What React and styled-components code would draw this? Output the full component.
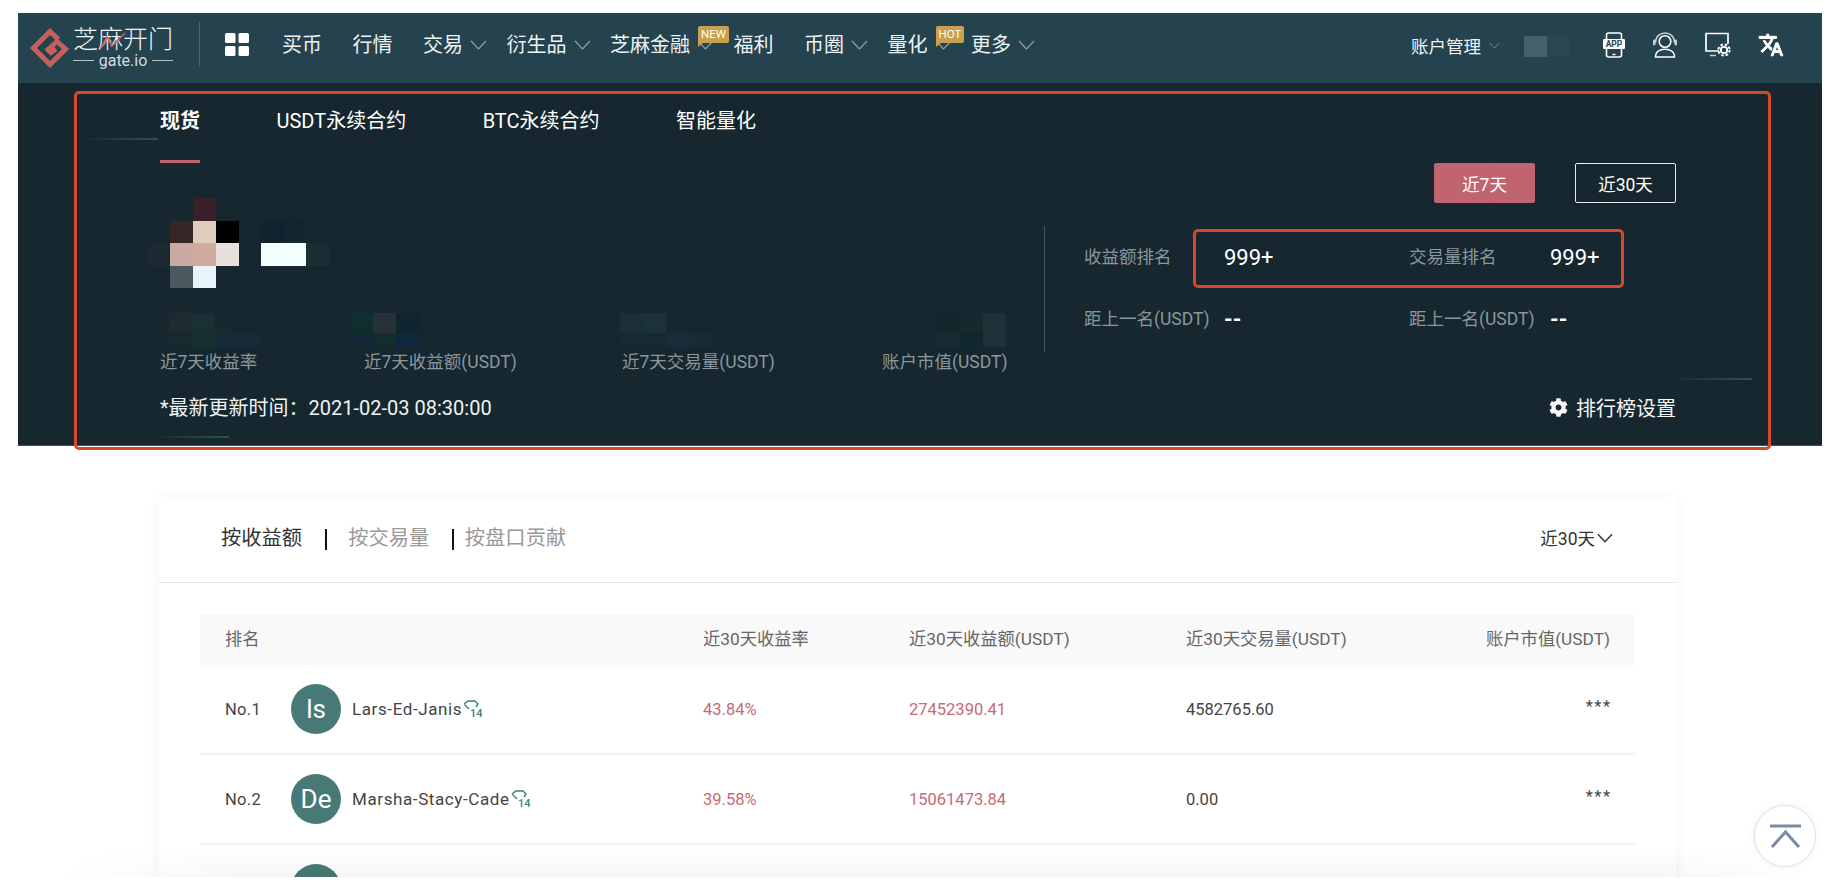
import React from "react";
import styled, { createGlobalStyle } from "styled-components";
import { FaCog } from "react-icons/fa";

const GlobalStyle = createGlobalStyle`
  html, body {
    margin: 0;
    padding: 0;
    background: #fff;
    overflow: hidden;
  }
  * {
    box-sizing: border-box;
  }
  body {
    font-family: Roboto, "Noto Sans CJK SC", sans-serif;
  }
`;

const Page = styled.div`
  width: 1838px;
  height: 890px;
  padding: 13px 16px 13px 18px;
`;

const Frame = styled.div`
  position: relative;
  height: 864px;
  overflow: hidden;
`;

const Header = styled.header`
  height: 70px;
  background: #25424f;
  display: flex;
  align-items: center;
  padding: 0 38px 7px 12px;
  color: #eef3f4;
`;

const LogoWrap = styled.div`
  display: flex;
  align-items: center;
  gap: 3px;
  margin-top: 6px;
`;

const LogoText = styled.div`
  position: relative;
  width: 100px;
  display: flex;
  flex-direction: column;
  align-items: stretch;
`;

const LogoName = styled.div`
  font-size: 25px;
  line-height: 26px;
  font-weight: 300;
  color: #f4f7f8;
  white-space: nowrap;
`;

const LogoSub = styled.div`
  display: flex;
  align-items: center;
  gap: 5px;
  font-size: 16px;
  line-height: 16px;
  color: #d4dcdf;

  &::before,
  &::after {
    content: "";
    flex: 1;
    height: 1px;
    background: #b9c5ca;
  }
`;

const LogoZig = styled.svg`
  position: absolute;
  left: 26px;
  top: 4px;
`;

const HeadDivider = styled.div`
  width: 1px;
  height: 45px;
  background: #4b6470;
  margin: 0 25px 0 26px;
`;

const NavList = styled.nav`
  display: flex;
  align-items: center;
  margin-left: 33px;
`;

const NavItem = styled.div`
  display: flex;
  align-items: center;
  gap: 7px;
  font-size: 20px;
  line-height: 28px;
  white-space: nowrap;
  margin-right: ${(p) => (p.$arrow ? "19.5px" : "30.5px")};
`;

const ArrowWrap = styled.span`
  position: relative;
  display: flex;
`;

const Badge = styled.span`
  position: absolute;
  left: 1px;
  top: -14px;
  min-width: 26px;
  height: 17px;
  padding: 0 3px;
  background: #c9a04e;
  border-radius: 2px 2px 2px 0;
  color: #fff;
  font-size: 11.5px;
  line-height: 17px;
  text-align: center;

  &::after {
    content: "";
    position: absolute;
    left: 0;
    bottom: -4px;
    border-top: 4px solid #c9a04e;
    border-right: 5px solid transparent;
  }
`;

const HeadRight = styled.div`
  margin-left: auto;
  display: flex;
  align-items: center;
`;

const AccountLink = styled.div`
  display: flex;
  align-items: center;
  gap: 8px;
  font-size: 17.5px;
  margin-top: 2px;
`;

const UserBlur = styled.div`
  display: flex;
  margin: 4px 33px 0 24px;
  border-radius: 1px;
`;

const BlurCell = styled.span`
  display: block;
  width: ${(p) => p.$w || 23}px;
  height: ${(p) => p.$h || 21}px;
  background: ${(p) => p.$c};
`;

const IconRow = styled.div`
  display: flex;
  align-items: center;
  gap: 27px;
`;

const Hero = styled.section`
  position: relative;
  height: 363px;
  padding: 0 146px 0 142px;
  background-color: #16272f;
  background-image: repeating-linear-gradient(
      90deg,
      rgba(255, 255, 255, 0.008) 0 1px,
      transparent 1px 70px
    ),
    repeating-linear-gradient(0deg, rgba(255, 255, 255, 0.006) 0 1px, transparent 1px 70px);
  border-bottom: 1px solid #3c5055;
  color: #fff;
`;

const Streak = styled.div`
  position: absolute;
  left: ${(p) => p.$x}px;
  top: ${(p) => p.$y}px;
  width: ${(p) => p.$w}px;
  height: 2px;
  background: linear-gradient(90deg, transparent, #2d5255);
`;

const TabBar = styled.div`
  display: flex;
  gap: 76.5px;
  height: 80px;
`;

const Tab = styled.div`
  padding-top: 25px;
  height: 80px;
  font-size: 20px;
  line-height: 26px;
  white-space: nowrap;
  font-weight: ${(p) => (p.$active ? 700 : 400)};
  border-bottom: 3px solid ${(p) => (p.$active ? "#c06570" : "transparent")};
`;

const HeroBody = styled.div`
  display: grid;
  grid-template-columns: 884px 1fr;
`;

const LeftCol = styled.div`
  padding-top: 35px;
`;

const Profile = styled.div`
  display: flex;
  align-items: flex-start;
  gap: 22px;
  margin-left: -13px;
`;

const PixelGrid = styled.div`
  display: grid;
  grid-template-columns: repeat(4, 23px);
  grid-auto-rows: 22.5px;
`;

const NameGrid = styled.div`
  display: grid;
  grid-template-columns: repeat(3, 22.5px);
  grid-auto-rows: 22.5px;
  margin-top: 22.5px;
`;

const Pixel = styled.span`
  background: ${(p) => p.$c};
`;

const StatGrid = styled.div`
  display: grid;
  grid-template-columns: 204px 258px 260px 1fr;
  margin-top: 25px;
`;

const Stat = styled.div`
  display: flex;
  flex-direction: column;
`;

const ValueBlur = styled.div`
  display: grid;
  grid-template-columns: repeat(${(p) => p.$cols}, 23px);
  grid-template-rows: 20px 14px;
  height: 34px;
  margin-left: ${(p) => p.$offset}px;
`;

const StatLabel = styled.div`
  margin-top: 3px;
  font-size: 17.5px;
  line-height: 24px;
  color: #8a979b;
  white-space: nowrap;
`;

const UpdateLine = styled.div`
  margin-top: 22px;
  font-size: 20px;
  line-height: 24px;
  color: #f0f3f4;
  white-space: nowrap;
`;

const RightCol = styled.div`
  display: flex;
  flex-direction: column;
`;

const RangeRow = styled.div`
  display: flex;
  justify-content: flex-end;
  gap: 40px;
  height: 40px;
`;

const RangeButton = styled.div`
  width: 101px;
  height: 40px;
  display: flex;
  align-items: center;
  justify-content: center;
  font-size: 17.5px;
  border-radius: 2px;
  border: 1px solid ${(p) => (p.$active ? "#c06570" : "#e8ecee")};
  background: ${(p) => (p.$active ? "#c06570" : "transparent")};
`;

const RankPanel = styled.div`
  position: relative;
  margin-top: 23px;
  height: 126px;
  border-left: 1px solid #47555b;
  padding-left: 39px;
  display: grid;
  grid-template-columns: 140px 185px 141px 1fr;
  grid-auto-rows: 62px;
  align-items: center;
`;

const RankLabel = styled.div`
  font-size: 17.5px;
  line-height: 24px;
  color: #8a979b;
  white-space: nowrap;
`;

const RankValue = styled.div`
  font-size: 22px;
  font-weight: ${(p) => (p.$dash ? 700 : 400)};
  color: #fff;
`;

const RankHighlight = styled.div`
  position: absolute;
  left: 148px;
  top: 3px;
  width: 431px;
  height: 59px;
  border: 3px solid #d9472b;
  border-radius: 5px;
  pointer-events: none;
`;

const SettingsLink = styled.div`
  margin-top: 43px;
  height: 24px;
  display: flex;
  justify-content: flex-end;
  align-items: center;
  gap: 8px;
  font-size: 20px;
  color: #f4f6f7;
`;

const Outline = styled.div`
  position: absolute;
  left: 56px;
  top: 78px;
  width: 1697px;
  height: 359px;
  border: 3px solid #d9472b;
  border-radius: 5px;
  pointer-events: none;
`;

const Card = styled.section`
  width: 1517px;
  margin: 51px 0 0 141px;
  background: #fff;
  box-shadow: 0 0 12px rgba(0, 0, 0, 0.05);
`;

const CardHead = styled.div`
  height: 86px;
  padding: 0 63px 4px 62px;
  display: flex;
  align-items: center;
  justify-content: space-between;
  border-bottom: 1px solid #e6e8e9;
`;

const SortTabs = styled.div`
  display: flex;
  align-items: center;
`;

const SortTab = styled.span`
  font-size: 20.3px;
  line-height: 24px;
  color: ${(p) => (p.$active ? "#333" : "#999")};
`;

const SortSep = styled.span`
  width: 2px;
  height: 21px;
  background: #111;
  margin: 4px ${(p) => (p.$tight ? 11 : 21.5)}px 0 22.5px;
`;

const PeriodSelect = styled.div`
  display: flex;
  align-items: center;
  gap: 2px;
  font-size: 17.5px;
  color: #333;
`;

const Table = styled.div`
  margin: 31px 41px 0;
`;

const HeadRow = styled.div`
  display: grid;
  grid-template-columns: 478px 206px 277px 1fr;
  align-items: center;
  height: 51px;
  background: #f9f9f9;
  padding: 0 25px 4px;
  font-size: 17.3px;
  color: #666;
`;

const BodyRow = styled.div`
  display: grid;
  grid-template-columns: 478px 206px 277px 1fr;
  align-items: center;
  height: 90px;
  padding: 0 25px;
  border-bottom: 2px solid #f3f3f3;
  font-size: 16.5px;
  color: #444;
`;

const RankCell = styled.div`
  display: flex;
  align-items: center;
`;

const RankNo = styled.span`
  width: 66px;
  letter-spacing: 0.3px;
`;

const Avatar = styled.span`
  width: 50px;
  height: 50px;
  border-radius: 50%;
  background: #477a76;
  color: #fff;
  font-size: 26px;
  display: flex;
  align-items: center;
  justify-content: center;
  margin-right: 11px;
`;

const UserName = styled.span`
  color: #444;
  font-size: 17px;
  letter-spacing: 0.6px;
  margin-right: 1px;
`;

const ProfitCell = styled.div`
  color: #c66a76;
`;

const SplitCell = styled.div`
  display: flex;
  align-items: center;
  justify-content: space-between;
`;

const MaskedValue = styled.span`
  letter-spacing: 1.5px;
  margin-right: -1.5px;
  transform: translateY(-3px);
`;

const BottomFade = styled.div`
  position: absolute;
  left: 40px;
  right: 10px;
  bottom: 0;
  height: 30px;
  background: linear-gradient(180deg, rgba(0, 0, 0, 0), rgba(0, 0, 0, 0.04));
  mask-image: linear-gradient(90deg, transparent, #000 12%, #000 90%, transparent);
  pointer-events: none;
`;

const BackTop = styled.div`
  position: absolute;
  right: 6px;
  bottom: 10px;
  width: 62px;
  height: 62px;
  border-radius: 50%;
  background: #fff;
  border: 1.5px solid #dbe2ee;
  box-shadow: 0 0 6px rgba(120, 140, 180, 0.15);
  display: flex;
  align-items: center;
  justify-content: center;
`;

const Chevron = ({ w = 17, h = 10, color = "#93a6ae", weight = 1.1 }) => (
  <svg width={w} height={h} viewBox="0 0 17 10" fill="none">
    <polyline points="1,1 8.5,9 16,1" stroke={color} strokeWidth={weight} />
  </svg>
);

const GateMark = () => (
  <svg width="40" height="40" viewBox="0 0 40 40" fill="none">
    <path
      d="M28.5 11.5 L20 3.5 L3.5 20 L20 36.5 L35.5 21 L27 13.5 L18 21.5 L21 24.5 L26 21"
      stroke="#c4615d"
      strokeWidth="5"
    />
  </svg>
);

const GridIcon = () => (
  <svg width="24" height="23" viewBox="0 0 24 23" fill="#fff">
    <rect x="0" y="0" width="10.5" height="10" rx="1.5" />
    <rect x="13.5" y="0" width="10.5" height="10" rx="1.5" />
    <rect x="0" y="13" width="10.5" height="10" rx="1.5" />
    <rect x="13.5" y="13" width="10.5" height="10" rx="1.5" />
  </svg>
);

const AppIcon = () => (
  <svg width="22" height="26" viewBox="0 0 22 26" fill="none">
    <rect x="3.5" y="1" width="15" height="24" rx="2" stroke="#fff" strokeWidth="1.6" />
    <line x1="9.5" y1="22.5" x2="12.5" y2="22.5" stroke="#fff" strokeWidth="1.4" />
    <rect x="0" y="7" width="22" height="10" rx="1" fill="#fff" />
    <text x="11" y="15" textAnchor="middle" fontSize="8.5" fontWeight="700" fontFamily="Roboto" fill="#25424f">
      APP
    </text>
  </svg>
);

const HeadsetIcon = () => (
  <svg width="26" height="27" viewBox="0 0 26 27" fill="none" stroke="#fff" strokeWidth="1.5">
    <path d="M3.5 12 C3.5 -1.5 22.5 -1.5 22.5 12" stroke="#c6d0d4" />
    <circle cx="13" cy="10.5" r="5.8" />
    <rect x="1" y="8.5" width="2.4" height="6" rx="1.2" fill="#c6d0d4" stroke="none" />
    <rect x="22.6" y="8.5" width="2.4" height="6" rx="1.2" fill="#c6d0d4" stroke="none" />
    <path d="M3.5 26 C3.5 20.5 8 18.2 13 18.2 C18 18.2 22.5 20.5 22.5 26 Z" />
  </svg>
);

const ScreenGearIcon = () => (
  <svg width="26" height="26" viewBox="0 0 26 26" fill="none" stroke="#fff">
    <path d="M14 19 H1 V1.5 H23 V12" strokeWidth="1.7" />
    <line x1="5" y1="23.5" x2="11" y2="23.5" strokeWidth="1.5" stroke="#c6d0d4" />
    <circle cx="19" cy="18" r="3.2" strokeWidth="1.8" />
    <circle cx="19" cy="18" r="5.6" strokeWidth="2" strokeDasharray="2.6 1.8" />
  </svg>
);

const TranslateIcon = () => (
  <svg width="26" height="26" viewBox="0 0 24 24" fill="#fff" stroke="#fff" strokeWidth="0.9">
    <path d="M12.87 15.07l-2.54-2.51.03-.03c1.74-1.94 2.98-4.17 3.71-6.53H17V4h-7V2H8v2H1v1.99h11.17C11.5 7.92 10.4 9.75 9 11.3 8.09 10.29 7.34 9.18 6.75 8h-2c.73 1.63 1.73 3.17 2.98 4.56l-5.09 5.02L4 19l5-5 3.11 3.11.76-2.04zM18.5 10h-2L12 22h2l1.12-3h4.75L21 22h2l-4.5-12zm-2.62 7l1.62-4.33L19.12 17h-3.24z" />
  </svg>
);

const LevelBadge = () => (
  <svg width="22" height="18" viewBox="0 0 22 18" fill="none">
    <path d="M1 4 L5 1 H12 L15 4 L13 7 M1 4 L6 9" stroke="#3f7d77" strokeWidth="1.4" />
    <text x="7" y="16.5" fontSize="11" fontWeight="500" fontFamily="Roboto" fill="#3f7d77">
      14
    </text>
  </svg>
);

const navItems = [
  { label: "买币" },
  { label: "行情" },
  { label: "交易", arrow: true },
  { label: "衍生品", arrow: true },
  { label: "芝麻金融", arrow: true, badge: "NEW" },
  { label: "福利" },
  { label: "币圈", arrow: true },
  { label: "量化", arrow: true, badge: "HOT" },
  { label: "更多", arrow: true },
];

const heroTabs = ["现货", "USDT永续合约", "BTC永续合约", "智能量化"];

const avatarPixels = [
  "transparent", "transparent", "#3a1f28", "transparent",
  "transparent", "#352525", "#e0cdbc", "#000",
  "#1b2a30", "#c8aaa2", "#cfaa9e", "#e8e0dc",
  "transparent", "#4a5860", "#e8f4fc", "transparent",
];

const namePixels = [
  "#12232f", "#12262f", "transparent",
  "#f4ffff", "#f4ffff", "#1c2d34",
];

const stats = [
  {
    label: "近7天收益率",
    offset: 9,
    cols: 4,
    cells: ["#1e2c30", "#1a3035", "#17282f", "#16272f", "#182a2e", "#16302e", "#162a38", "#172a38"],
  },
  {
    label: "近7天收益额(USDT)",
    offset: -14,
    cols: 3,
    cells: ["#102e2e", "#283038", "#10262e", "#15283a", "#122e2c", "#10283e"],
  },
  {
    label: "近7天交易量(USDT)",
    offset: -2,
    cols: 4,
    cells: ["#1b2f37", "#1a3238", "#16272f", "#16272f", "#172a33", "#172a33", "#192c3a", "#182b36"],
  },
  {
    label: "账户市值(USDT)",
    offset: 55,
    cols: 3,
    cells: ["#14282b", "#142a2d", "#1d3238", "#182a32", "#10282c", "#1d3238"],
  },
];

const rows = [
  { no: "No.1", short: "ls", name: "Lars-Ed-Janis", rate: "43.84%", profit: "27452390.41", volume: "4582765.60", value: "***" },
  { no: "No.2", short: "De", name: "Marsha-Stacy-Cade", rate: "39.58%", profit: "15061473.84", volume: "0.00", value: "***" },
];

const App = () => {
  return (
    <Page>
      <GlobalStyle />
      <Frame>
        <Header>
          <LogoWrap>
            <GateMark />
            <LogoText>
              <LogoName>芝麻开门</LogoName>
              <LogoSub>gate.io</LogoSub>
              <LogoZig width="34" height="20" viewBox="0 0 34 20" fill="none">
                <polyline points="2,17 8,6 13,15 26,2" stroke="#c4615d" strokeWidth="1.6" />
              </LogoZig>
            </LogoText>
          </LogoWrap>
          <HeadDivider />
          <GridIcon />
          <NavList>
            {navItems.map((item) => (
              <NavItem key={item.label} $arrow={item.arrow}>
                {item.label}
                {item.arrow && (
                  <ArrowWrap>
                    <Chevron />
                    {item.badge && <Badge>{item.badge}</Badge>}
                  </ArrowWrap>
                )}
              </NavItem>
            ))}
          </NavList>
          <HeadRight>
            <AccountLink>
              账户管理
              <Chevron w={11} h={7} />
            </AccountLink>
            <UserBlur>
              <BlurCell $c="#46606d" />
              <BlurCell $c="#2a4853" />
            </UserBlur>
            <IconRow>
              <AppIcon />
              <HeadsetIcon />
              <ScreenGearIcon />
              <TranslateIcon />
            </IconRow>
          </HeadRight>
        </Header>

        <Hero>
          <Streak $x={62} $y={55} $w={78} />
          <Streak $x={132} $y={353} $w={79} />
          <Streak $x={1649} $y={295} $w={85} />
          <TabBar>
            {heroTabs.map((tab, i) => (
              <Tab key={tab} $active={i === 0}>
                {tab}
              </Tab>
            ))}
          </TabBar>
          <HeroBody>
            <LeftCol>
              <Profile>
                <PixelGrid>
                  {avatarPixels.map((c, i) => (
                    <Pixel key={i} $c={c} />
                  ))}
                </PixelGrid>
                <NameGrid>
                  {namePixels.map((c, i) => (
                    <Pixel key={i} $c={c} />
                  ))}
                </NameGrid>
              </Profile>
              <StatGrid>
                {stats.map((s) => (
                  <Stat key={s.label}>
                    <ValueBlur $cols={s.cols} $offset={s.offset}>
                      {s.cells.map((c, i) => (
                        <Pixel key={i} $c={c} />
                      ))}
                    </ValueBlur>
                    <StatLabel>{s.label}</StatLabel>
                  </Stat>
                ))}
              </StatGrid>
              <UpdateLine>*最新更新时间：2021-02-03 08:30:00</UpdateLine>
            </LeftCol>
            <RightCol>
              <RangeRow>
                <RangeButton $active>近7天</RangeButton>
                <RangeButton>近30天</RangeButton>
              </RangeRow>
              <RankPanel>
                <RankLabel>收益额排名</RankLabel>
                <RankValue>999+</RankValue>
                <RankLabel>交易量排名</RankLabel>
                <RankValue>999+</RankValue>
                <RankLabel>距上一名(USDT)</RankLabel>
                <RankValue $dash>--</RankValue>
                <RankLabel>距上一名(USDT)</RankLabel>
                <RankValue $dash>--</RankValue>
                <RankHighlight />
              </RankPanel>
              <SettingsLink>
                <FaCog size={19} />
                排行榜设置
              </SettingsLink>
            </RightCol>
          </HeroBody>
        </Hero>

        <Card>
          <CardHead>
            <SortTabs>
              <SortTab $active>按收益额</SortTab>
              <SortSep />
              <SortTab>按交易量</SortTab>
              <SortSep $tight />
              <SortTab>按盘口贡献</SortTab>
            </SortTabs>
            <PeriodSelect>
              近30天
              <Chevron w={16} h={10} color="#333" weight={1.6} />
            </PeriodSelect>
          </CardHead>
          <Table>
            <HeadRow>
              <div>排名</div>
              <div>近30天收益率</div>
              <div>近30天收益额(USDT)</div>
              <SplitCell>
                <span>近30天交易量(USDT)</span>
                <span>账户市值(USDT)</span>
              </SplitCell>
            </HeadRow>
            {rows.map((r) => (
              <BodyRow key={r.no}>
                <RankCell>
                  <RankNo>{r.no}</RankNo>
                  <Avatar>{r.short}</Avatar>
                  <UserName>{r.name}</UserName>
                  <LevelBadge />
                </RankCell>
                <ProfitCell>{r.rate}</ProfitCell>
                <ProfitCell>{r.profit}</ProfitCell>
                <SplitCell>
                  <span>{r.volume}</span>
                  <MaskedValue>{r.value}</MaskedValue>
                </SplitCell>
              </BodyRow>
            ))}
            <BodyRow>
              <RankCell>
                <RankNo />
                <Avatar />
              </RankCell>
            </BodyRow>
          </Table>
        </Card>

        <Outline />
        <BottomFade />
        <BackTop>
          <svg width="31" height="24" viewBox="0 0 31 24" fill="none" stroke="#7a8ba5" strokeWidth="3">
            <line x1="0" y1="2" x2="31" y2="2" />
            <polyline points="2,23 15.5,8 29,23" />
          </svg>
        </BackTop>
      </Frame>
    </Page>
  );
};

export default App;
